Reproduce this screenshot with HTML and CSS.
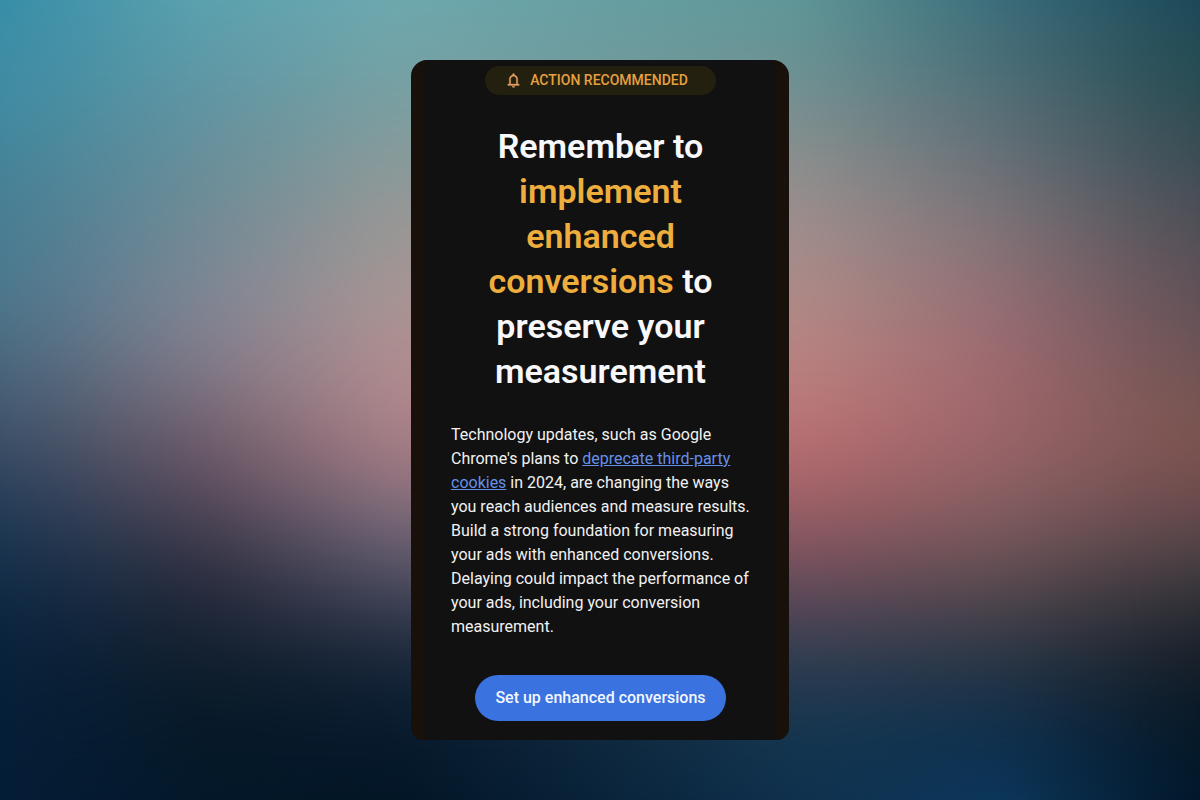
FILE: index.html
```html
<!DOCTYPE html>
<html lang="en">
<head>
<meta charset="utf-8">
<meta name="viewport" content="width=device-width, initial-scale=1">
<title>Enhanced conversions</title>
<link rel="stylesheet" href="styles.css">
</head>
<body>
<div class="backdrop" aria-hidden="true">
  <div class="band band-1"></div>
  <div class="band band-2"></div>
  <div class="band band-3"></div>
  <div class="band band-4"></div>
  <div class="band band-5"></div>
  <div class="band band-6"></div>
  <div class="band haze"></div>
</div>
<main class="stage">
  <article class="card">
    <div class="badge">
      <svg class="badge-icon" viewBox="0 0 24 24" aria-hidden="true"><path fill="currentColor" stroke="currentColor" stroke-width=".4" d="M4 19v-2h2v-7c0-2.800 1.900-5.200 4.500-5.800V3.500a1.500 1.500 0 0 1 3 0v.7C16.100 4.800 18 7.200 18 10v7h2v2zm8 3a2 2 0 0 1-2-2h4a2 2 0 0 1-2 2zm-4-5h8v-7c0-2.200-1.800-4-4-4s-4 1.800-4 4z"/></svg>
      <span>ACTION RECOMMENDED</span>
    </div>
    <h1 class="title">Remember to <span class="accent">implement enhanced conversions</span> to preserve your measurement</h1>
    <p class="copy">Technology updates, such as Google Chrome's plans to <a class="link" href="#cookies">deprecate third-party cookies</a> in 2024, are changing the ways you reach audiences and measure results. Build a strong foundation for measuring your ads with enhanced conversions. Delaying could impact the performance of your ads, including your conversion measurement.</p>
    <button class="cta" type="button">Set up enhanced conversions</button>
  </article>
</main>
</body>
</html>
```
FILE: styles.css
```css
* { box-sizing: border-box; }

body {
  margin: 0;
  font-family: Roboto, "Liberation Sans", sans-serif;
  background: #071c30;
}

/* Soft sunset: vertical gradients cross-faded from left to right */
.backdrop {
  position: fixed;
  inset: 0;
  z-index: -1;
}

.band {
  position: absolute;
  inset: 0;
}

.band-1 {
  background: linear-gradient(#378ea8, #3f8ba2 12.5%, #467f95 25%, #4a768c 37.5%, #48697f 44%, #435c73 50%, #374d65 56%, #253f5a 62.5%, #17344f 69%, #0f2a45 75%, #09233d 81%, #07203a 88%, #051d37);
}

.band-2 {
  background: linear-gradient(#5ba3b0, #6094a2 12.5%, #6d8c96 25%, #7f8594 37.5%, #827d8c 44%, #796d7b 50%, #6c5866 56%, #55485a 62.5%, #353444 69%, #23283a 75%, #14202e 81%, #081a28 88%, #04182a);
  mask-image: linear-gradient(to right, transparent 0, #000 16.667%);
}

.band-3 {
  background: linear-gradient(#6caab0, #7a9fa1 12.5%, #959896 25%, #aa9694 37.5%, #b28e90 44%, #b08a8e 50%, #a87d85 56%, #86707e 62.5%, #625d70 69%, #3f4255 75%, #1e2b3d 81%, #0b1c30 88%, #021525);
  mask-image: linear-gradient(to right, transparent 16.667%, #000 33.333%);
}

.band-4 {
  background: linear-gradient(#5e9798, #669394 6%, #769092 12.5%, #888e8c 19%, #9a8f8f 25%, #b08a86 37.5%, #b88482 44%, #bd7a79 50%, #b76c70 56%, #a06166 62.5%, #80525e 69%, #5b4858 75%, #363f52 81%, #1c3850 88%, #123650 94%, #10304e);
  mask-image: linear-gradient(to right, transparent 33.333%, #000 66.667%);
}

.band-5 {
  background: linear-gradient(#386c7b, #466e78 6%, #566e76 12.5%, #646f77 19%, #767378 25%, #857276 31%, #946e74 37.5%, #9c6a70 44%, #9f676c 50%, #99646a 56%, #875f61 62.5%, #6e5458 69%, #4f454c 75%, #303845 81%, #163048 88%, #0d3152 94%, #0d3a5f);
  mask-image: linear-gradient(to right, transparent 66.667%, #000 83.333%);
}

.band-6 {
  background: linear-gradient(#1b4658, #204a52 6%, #2b4a50 12.5%, #384b53 19%, #474c55 25%, #544e55 31%, #5e5056 37.5%, #6b5254 44%, #745450 50%, #7a534f 56%, #6b4a4c 62.5%, #4c4145 69%, #2f3036 75%, #1a2029 81%, #0b1825 88%, #041827 94%, #021629);
  mask-image: linear-gradient(to right, transparent 83.333%, #000 100%);
}

.haze { backdrop-filter: blur(32px); }

.stage {
  min-height: 100vh;
  display: flex;
  align-items: center;
  justify-content: center;
}

.card {
  width: 100%;
  max-width: 378px;
  padding: 6px 25px 19px 26px;
  display: flex;
  flex-direction: column;
  align-items: center;
  color: #f1f1f2;
  background: #111;
  border: solid #18100b;
  border-width: 0 14px;
  border-radius: 16px 16px 12px 12px;
}

.badge {
  display: flex;
  align-items: center;
  gap: 8px;
  padding: 0 28px 0 20px;
  border-radius: 15px;
  background: #232010;
  color: #e6a040;
  font-size: 14px;
  line-height: 29px;
  font-weight: 500;
}

.badge-icon {
  width: 17px;
  height: 17px;
  color: #e5a066;
}

.title {
  margin: 29px 0 0;
  font-size: 34px;
  line-height: 45px;
  font-weight: 600;
  text-align: center;
  color: #f8f8fb;
}

.accent { color: #eeae3e; }

.copy {
  margin: 29px 0 0;
  font-size: 16px;
  line-height: 24px;
}

.link {
  color: #6590e8;
  text-decoration: underline;
}

.cta {
  margin-top: 36px;
  padding: 0 20px;
  border: 0;
  border-radius: 23px;
  background: #3a72e0;
  color: #f3f7ff;
  font-family: inherit;
  font-size: 16px;
  line-height: 46px;
  font-weight: 500;
  cursor: pointer;
}
```
